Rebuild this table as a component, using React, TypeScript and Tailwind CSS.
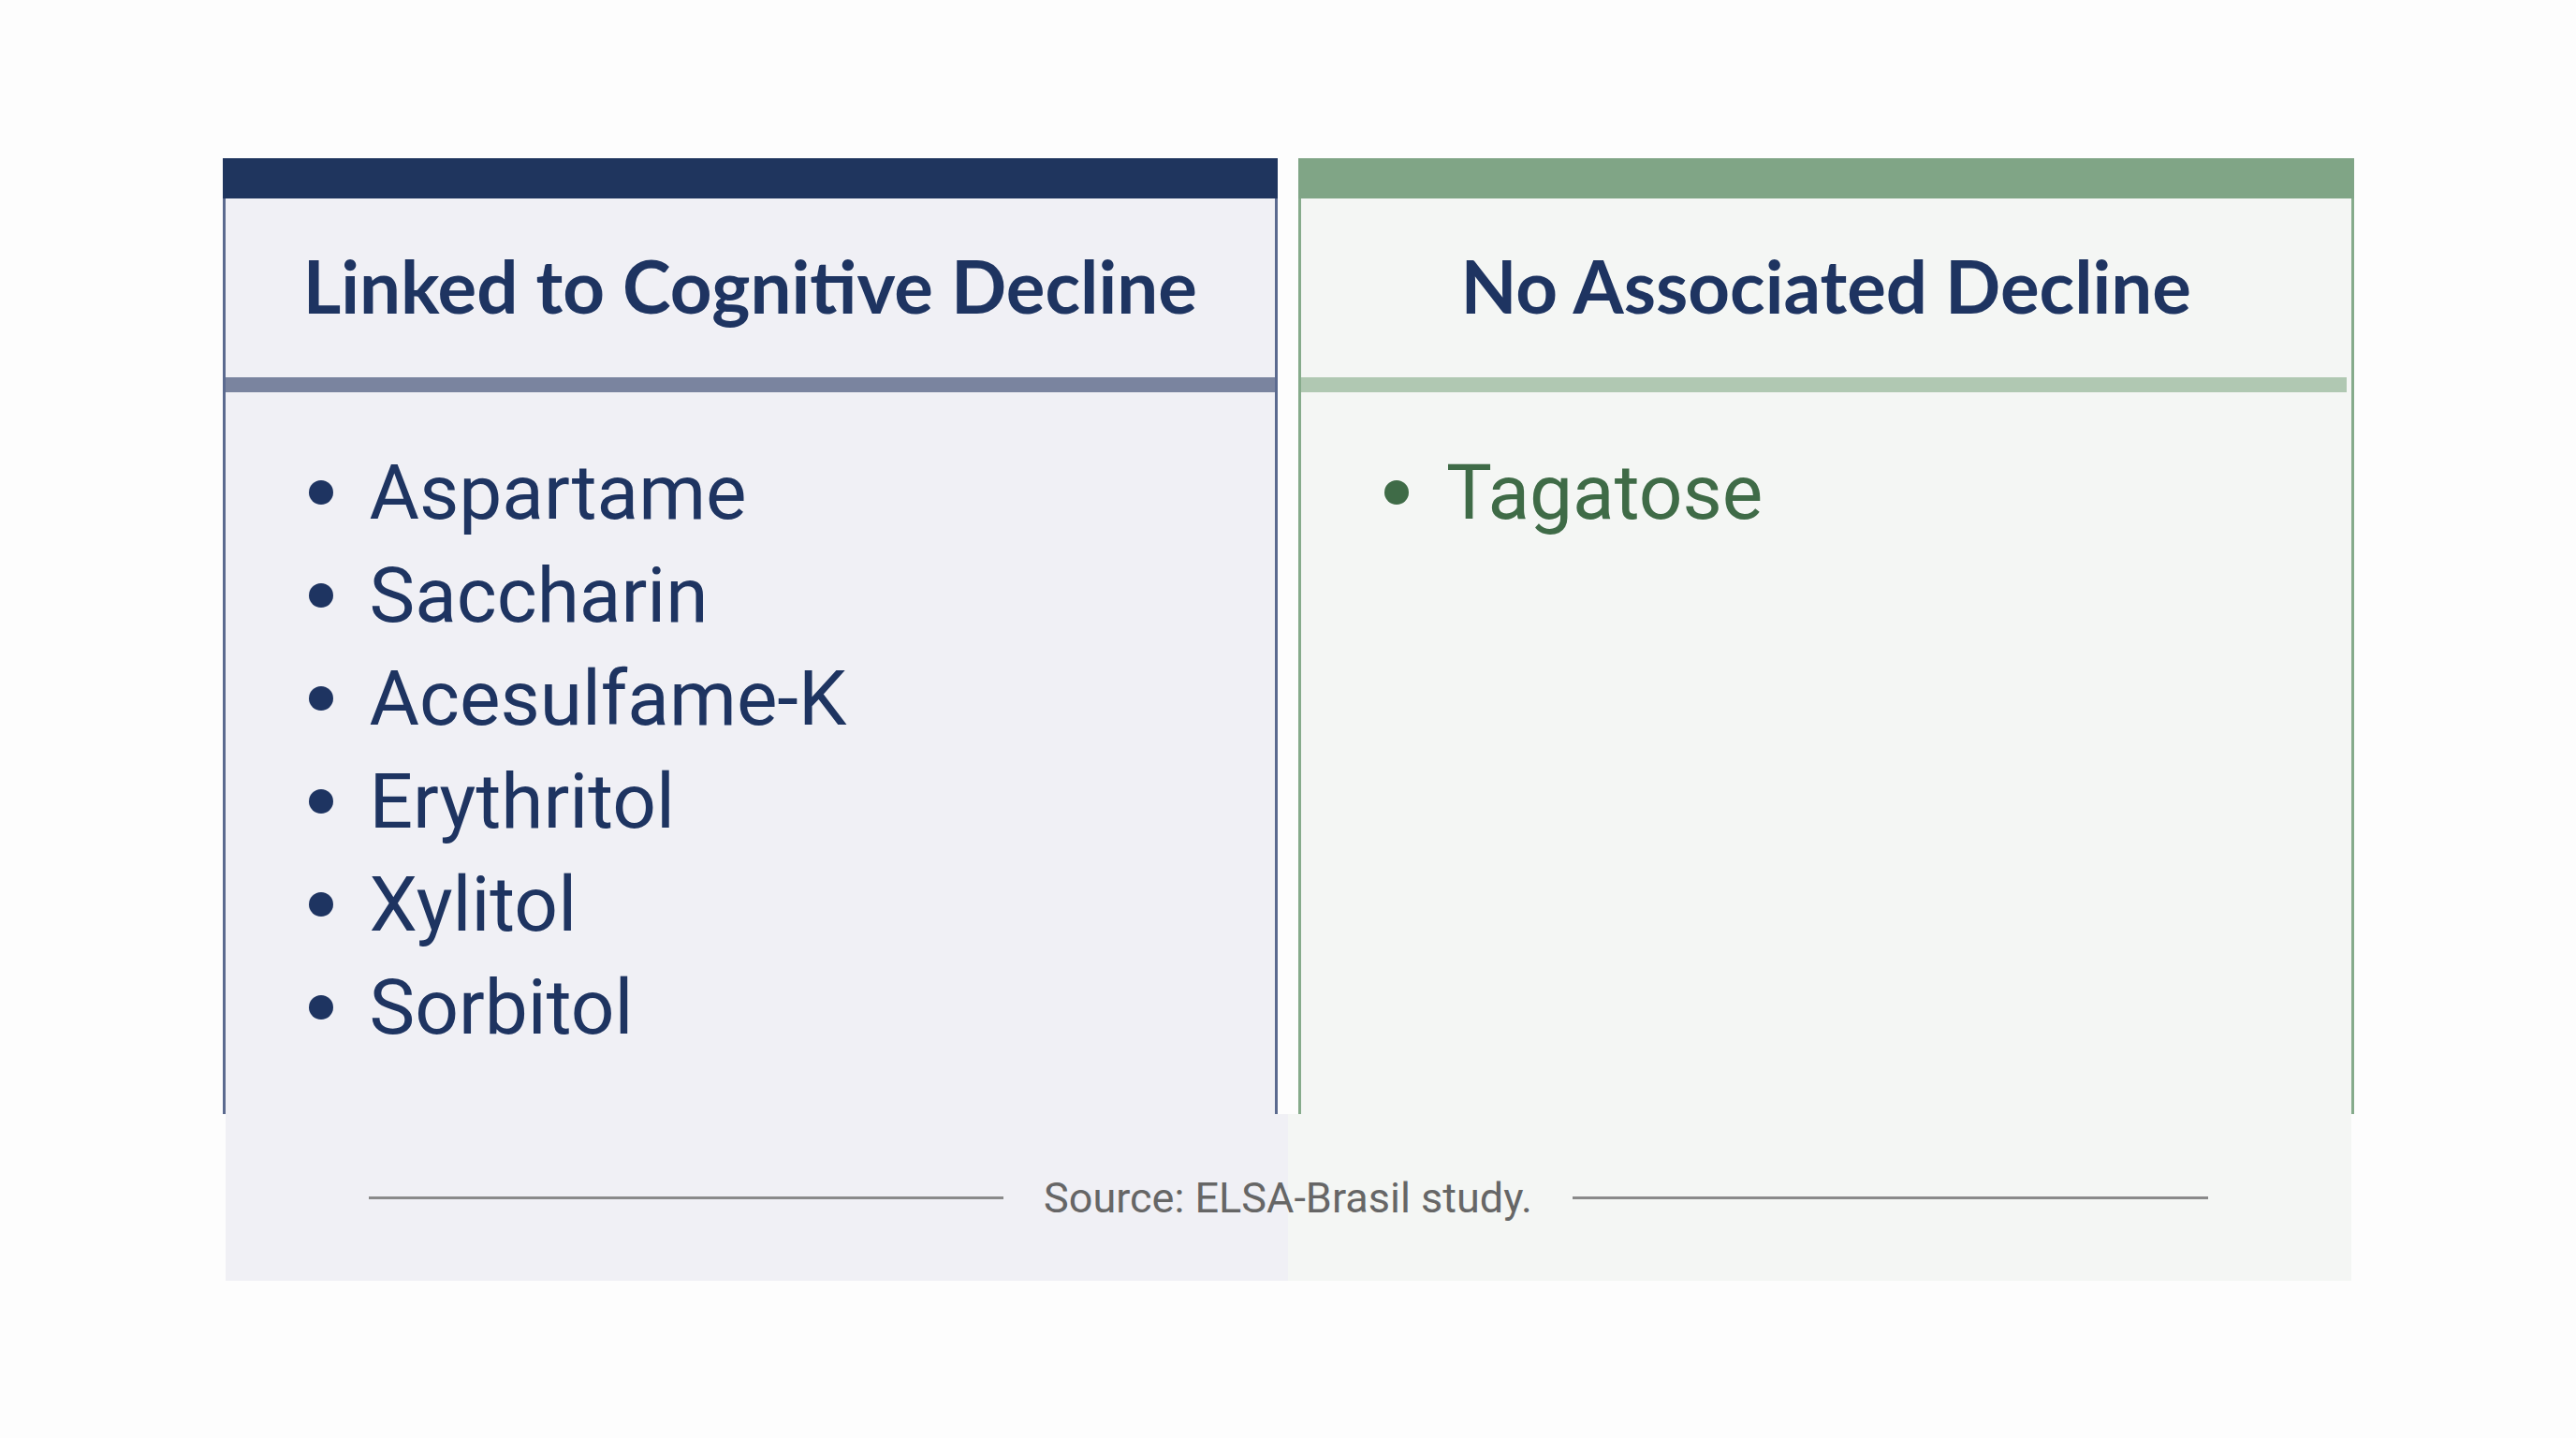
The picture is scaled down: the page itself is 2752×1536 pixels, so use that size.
const linked = ['Aspartame', 'Saccharin', 'Acesulfame-K', 'Erythritol', 'Xylitol', 'Sorbitol'];
const noDecline = ['Tagatose'];

const headingFont = { fontFamily: 'Lato, "Open Sans", sans-serif' };

const App = () => {
	return (
		<div className="min-h-screen w-full bg-[#fdfdfd] font-['Roboto',sans-serif]">
			<div className="mx-auto flex w-[2277px] flex-col pt-[169px]">
				<div className="grid grid-cols-2 gap-[22px]">
					<section className="flex flex-col">
						<div className="h-[43px] bg-[#1f355e]" />
						<div className="flex h-[978px] flex-col border-x-[3px] border-[#5b6a8f] bg-[#f0f0f5]">
							<div className="flex h-[191px] items-center justify-center pb-[6px]">
								<h2
									style={headingFont}
									className="font-['Lato','Open_Sans',sans-serif] text-[78px] font-bold leading-none text-[#1e3461]"
								>
									Linked to Cognitive Decline
								</h2>
							</div>
							<div className="h-[16px] bg-[#7a849f]" />
							<ul className="flex flex-col pl-[89px] pt-[52px]">
								{linked.map((item) => (
									<li key={item} className="flex h-[110px] items-center gap-[39px]">
										<span className="h-[26px] w-[26px] rounded-full bg-[#1e3461]" />
										<span className="text-[82px] leading-[110px] text-[#1e3461]">{item}</span>
									</li>
								))}
							</ul>
						</div>
					</section>
					<section className="flex flex-col">
						<div className="h-[43px] bg-[#80a586]" />
						<div className="flex h-[978px] flex-col border-x-[3px] border-[#86ab8b] bg-[#f4f6f4]">
							<div className="flex h-[191px] items-center justify-center pb-[6px]">
								<h2
									style={headingFont}
									className="font-['Lato','Open_Sans',sans-serif] text-[78px] font-bold leading-none text-[#1e3461]"
								>
									No Associated Decline
								</h2>
							</div>
							<div className="mr-[5px] h-[16px] bg-[#b0c8b2]" />
							<ul className="flex flex-col pl-[89px] pt-[52px]">
								{noDecline.map((item) => (
									<li key={item} className="flex h-[110px] items-center gap-[40px]">
										<span className="h-[26px] w-[26px] rounded-full bg-[#3f6b47]" />
										<span className="text-[82px] leading-[110px] text-[#3f6b47]">{item}</span>
									</li>
								))}
							</ul>
						</div>
					</section>
				</div>
				<footer className="mx-[3px] flex h-[178px] items-center gap-[43px] bg-[linear-gradient(to_right,#f0f0f5_50%,#f4f6f4_50%)] px-[153px]">
					<div className="h-[3px] flex-1 bg-[#8a8a8a]" />
					<p className="text-[45px] leading-none text-[#666666]">Source: ELSA-Brasil study.</p>
					<div className="h-[3px] flex-1 bg-[#8a8a8a]" />
				</footer>
			</div>
		</div>
	);
};

export default App;
